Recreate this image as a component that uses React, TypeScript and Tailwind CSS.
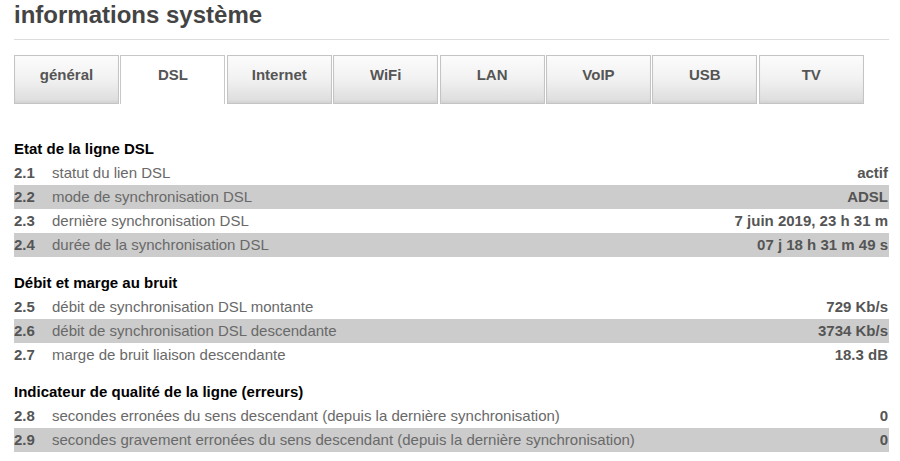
import React from "react";

type Row = { n: string; label: string; value: string };
type Section = { title: string; rows: Row[]; mt: string };

const tabs = ["général", "DSL", "Internet", "WiFi", "LAN", "VoIP", "USB", "TV"];

const sections: Section[] = [
    {
        title: "Etat de la ligne DSL",
        mt: "mt-[35px]",
        rows: [
            { n: "2.1", label: "statut du lien DSL", value: "actif" },
            { n: "2.2", label: "mode de synchronisation DSL", value: "ADSL" },
            { n: "2.3", label: "dernière synchronisation DSL", value: "7 juin 2019, 23 h 31 m" },
            { n: "2.4", label: "durée de la synchronisation DSL", value: "07 j 18 h 31 m 49 s" },
        ],
    },
    {
        title: "Débit et marge au bruit",
        mt: "mt-[16px]",
        rows: [
            { n: "2.5", label: "débit de synchronisation DSL montante", value: "729 Kb/s" },
            { n: "2.6", label: "débit de synchronisation DSL descendante", value: "3734 Kb/s" },
            { n: "2.7", label: "marge de bruit liaison descendante", value: "18.3 dB" },
        ],
    },
    {
        title: "Indicateur de qualité de la ligne (erreurs)",
        mt: "mt-[15px]",
        rows: [
            { n: "2.8", label: "secondes erronées du sens descendant (depuis la dernière synchronisation)", value: "0" },
            { n: "2.9", label: "secondes gravement erronées du sens descendant (depuis la dernière synchronisation)", value: "0" },
        ],
    },
];

const App: React.FC = () => {
    return (
        <div className="min-h-[461px] bg-white pl-[14px] w-[889px]" style={{ fontFamily: '"Liberation Sans", Arial, sans-serif' }}>
            {/* title + rule */}
            <div className="h-[40px] border-b border-[#dcdcdc]">
                <h1 className="text-[24px] leading-[30px] font-bold text-[#444444]">informations système</h1>
            </div>

            {/* tabs - DSL is the selected one */}
            <div className="flex gap-[1.4px] mt-[15px]">
                {tabs.map((t) =>
                    t === "DSL" ? (
                        <div key={t} className="w-[105px] h-[49px] border border-b-0 border-[#c8c8c8] bg-white text-center pt-[9px] text-[15px] leading-[20px] font-bold text-[#555555]">
                            {t}
                        </div>
                    ) : (
                        <div key={t} className="w-[105px] h-[49px] border border-[#c4c4c4] bg-linear-to-b from-[#fcfcfc] via-[#f1f1f1] to-[#dcdcdc] text-center pt-[9px] text-[15px] leading-[20px] font-bold text-[#555555] shadow-[inset_0_-2px_2px_rgba(0,0,0,0.04)]">
                            {t}
                        </div>
                    )
                )}
            </div>

            {sections.map((s) => (
                <div key={s.title} className={s.mt}>
                    <h2 className="h-[20px] leading-[20px] text-[15px] font-bold text-black mb-[2px]">{s.title}</h2>
                    {s.rows.map((r, i) => (
                        <div key={r.n} className={`flex items-center h-[24px] text-[15px] ${i % 2 === 1 ? "bg-[#cccccc]" : ""}`}>
                            <span className="w-[38px] font-bold text-[#555555]">{r.n}</span>
                            <span className="text-[#696969]">{r.label}</span>
                            <span className="ml-auto pr-[1px] font-bold text-[#555555]">{r.value}</span>
                        </div>
                    ))}
                </div>
            ))}
        </div>
    );
};

export default App;
